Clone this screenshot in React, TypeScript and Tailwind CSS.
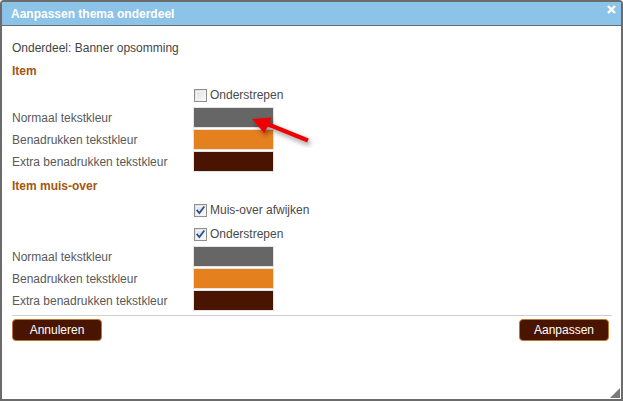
import React from "react";

const font = { fontFamily: '"Liberation Sans", Arial, sans-serif' };

function Box({ checked }: { checked: boolean }) {
  return (
    <span className="relative inline-block w-[13px] h-[13px] border border-[#8e8f8f] bg-gradient-to-br from-[#dcdcdc] to-[#fbfbfb] box-border">
      <span className="absolute inset-[1px] border border-[#f4f4f4]" />
      {checked && (
        <svg className="absolute left-[1px] top-[1px]" width="9" height="9" viewBox="0 0 9 9">
          <path d="M1.2 4.6 L3.4 7 L7.8 1.2" fill="none" stroke="#2a4f9a" strokeWidth="1.8" strokeLinecap="square" />
        </svg>
      )}
    </span>
  );
}

function CheckRow({ label, checked, h }: { label: string; checked: boolean; h: string }) {
  return (
    <div className={`flex items-center ${h}`}>
      <div className="w-[182px]" />
      <Box checked={checked} />
      <span className="ml-[3px] text-[12px] text-[#4a4a4a]">{label}</span>
    </div>
  );
}

function ColorRow({ label, color }: { label: string; color: string }) {
  return (
    <div className="flex items-start h-[22px]">
      <div className="w-[181px] h-[21px] flex items-center text-[12px] text-[#595959]">{label}</div>
      <div className="w-[81px] h-[21px] border border-[#e4e4e4] box-border" style={{ backgroundColor: color }} />
    </div>
  );
}

const swatches = [
  { label: "Normaal tekstkleur", color: "#666666" },
  { label: "Benadrukken tekstkleur", color: "#e5801e" },
  { label: "Extra benadrukken tekstkleur", color: "#4a1500" },
];

function Btn({ children }: { children: React.ReactNode }) {
  return (
    <button className="w-[90px] h-[22px] rounded-[4px] bg-[#4a1500] border border-[#c0762f] text-white text-[12px] leading-none">
      {children}
    </button>
  );
}

export default function App() {
  return (
    <div style={font} className="relative w-[623px] h-[401px] bg-white border-2 border-[#6b6b6b] rounded-t-[4px] flex flex-col overflow-hidden">
      {/* title bar */}
      <div className="h-[24px] bg-[#8cc3e8] border-b border-[#6b6b6b] flex items-center justify-between pl-[9px] pr-[4px] shrink-0">
        <span className="text-white font-bold text-[12px]">Aanpassen thema onderdeel</span>
        <svg width="9" height="9" viewBox="0 0 9 9" className="-mt-[9px] mr-[1px]">
          <path d="M1 1 L8 8 M8 1 L1 8" stroke="#fff" strokeWidth="2.4" />
        </svg>
      </div>

      <div className="pt-[11px] pl-[10px] pr-[9px] flex flex-col">
        <div className="h-[21px] flex items-center text-[12px] text-[#444]">Onderdeel: Banner opsomming</div>
        <div className="h-[26px] flex items-center text-[12px] font-bold text-[#a5560f]">Item</div>
        <CheckRow label="Onderstrepen" checked={false} h="h-[22px]" />
        <div className="mt-[1px]">
          {swatches.map((s) => (
            <ColorRow key={"a" + s.label} label={s.label} color={s.color} />
          ))}
        </div>
        <div className="h-[25px] flex items-center text-[12px] font-bold text-[#a5560f]">Item muis-over</div>
        <CheckRow label="Muis-over afwijken" checked={true} h="h-[24px]" />
        <CheckRow label="Onderstrepen" checked={true} h="h-[24px]" />
        <div>
          {swatches.map((s) => (
            <ColorRow key={"b" + s.label} label={s.label} color={s.color} />
          ))}
        </div>
        <div className="mt-[3px] border-t border-[#cfcfcf]" />
        <div className="mt-[3px] flex justify-between pr-[3px]">
          <Btn>Annuleren</Btn>
          <Btn>Aanpassen</Btn>
        </div>
      </div>

      {/* resize grip */}
      <svg className="absolute right-[1px] bottom-[1px]" width="10" height="10" viewBox="0 0 10 10">
        <path d="M10 0 L10 10 L0 10 Z" fill="#7a7a7a" />
      </svg>

      {/* pointer arrow */}
      <svg className="absolute left-[240px] top-[100px]" width="80" height="55" viewBox="240 100 80 55">
        <defs>
          <filter id="arrowShadow" x="-30%" y="-30%" width="160%" height="160%">
            <feDropShadow dx="2" dy="3" stdDeviation="2.5" floodColor="#000" floodOpacity="0.4" />
          </filter>
        </defs>
        <g filter="url(#arrowShadow)">
          <path d="M306 138.5 L264 121.5" stroke="#ee0000" strokeWidth="4.2" strokeLinecap="butt" />
          <path d="M250 117 L269.5 115.5 L262.5 131.5 Z" fill="#ee0000" />
        </g>
      </svg>
    </div>
  );
}
